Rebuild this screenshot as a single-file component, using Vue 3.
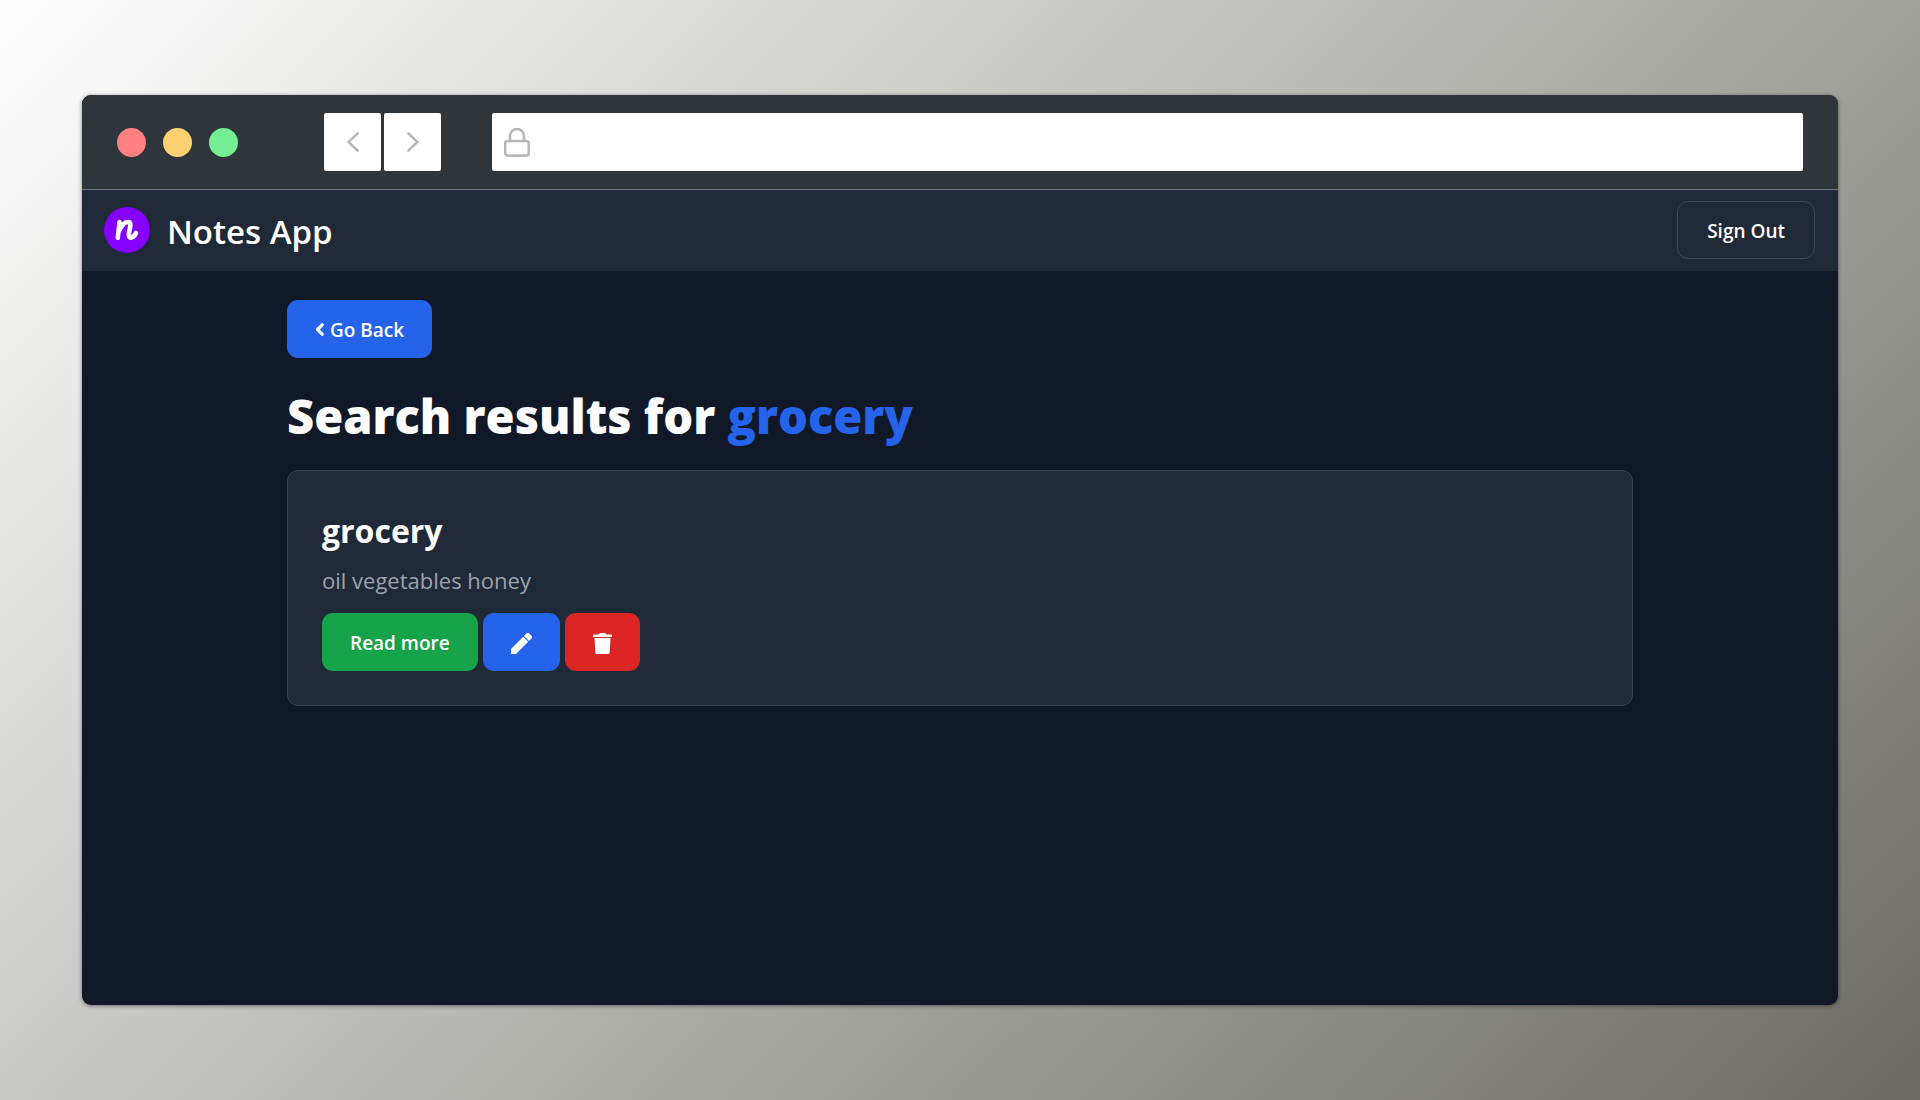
<script setup>
import { ref } from 'vue'

const query = ref('grocery')
const address = ref('')
const notes = ref([{ id: 1, title: 'grocery', body: 'oil vegetables honey' }])
</script>

<template>
  <div class="page">
    <div class="window">
      <div class="chrome">
        <div class="lights">
          <span class="light red"></span>
          <span class="light amber"></span>
          <span class="light green"></span>
        </div>
        <div class="history">
          <button type="button" class="step" aria-label="Back">
            <svg width="12" height="20" viewBox="0 0 12 20"><path d="M10.500 1.500 1.500 10l9 8.500" /></svg>
          </button>
          <button type="button" class="step" aria-label="Forward">
            <svg width="12" height="20" viewBox="0 0 12 20"><path d="M1.500 1.500 10.500 10l-9 8.500" /></svg>
          </button>
        </div>
        <div class="address">
          <svg width="26" height="29" viewBox="0 0 26 29">
            <path d="M6 13V8a7 7 0 0 1 14 0v5" />
            <rect x="1.200" y="13" width="23.600" height="14.600" rx="2.500" />
          </svg>
          <input v-model="address" type="text" aria-label="Address" />
        </div>
      </div>

      <header class="navbar">
        <a class="brand" href="#">
          <svg width="46" height="46" viewBox="0 0 46 46">
            <circle cx="23" cy="23" r="23" fill="#8500ff" />
            <path
              d="M15.500 15c.2 5-1.500 10.500-1.700 15.800M15.500 23c2.500-5 5-8 8.500-8 4.500 0 1.300 7 .8 12.500-.2 5 5 3.500 7.200-1.500"
              fill="none"
              stroke="#fff"
              stroke-width="4.600"
              stroke-linecap="round"
              stroke-linejoin="round"
            />
          </svg>
          <span>Notes App</span>
        </a>
        <button type="button" class="btn outline">Sign Out</button>
      </header>

      <main class="content">
        <button type="button" class="btn blue">
          <svg class="chevron" width="9" height="14" viewBox="0 0 9 14">
            <path d="M7.200 1.800 2.500 6.500l4.700 4.700" fill="none" stroke="#fff" stroke-width="3.200" stroke-linecap="round" stroke-linejoin="round" />
          </svg>
          Go Back
        </button>
        <h1>Search results for <span>{{ query }}</span></h1>
        <article v-for="note in notes" :key="note.id" class="card">
          <h2>{{ note.title }}</h2>
          <p>{{ note.body }}</p>
          <div class="actions">
            <button type="button" class="btn green">Read more</button>
            <button type="button" class="btn blue" aria-label="Edit note">
              <svg width="21" height="21" viewBox="0 0 21 21" fill="#fff">
                <path d="M0 21v-5L12.200 3.800l5 5L5 21z" />
                <path d="M13 3 15.400.6a2 2 0 0 1 2.800 0l2.200 2.200a2 2 0 0 1 0 2.800L18 8z" />
              </svg>
            </button>
            <button type="button" class="btn danger" aria-label="Delete note">
              <svg width="19" height="21" viewBox="0 0 19 21" fill="#fff">
                <path d="M.8 1.600h4.700L6.300.4Q6.600 0 7.100 0h4.800q.5 0 .8.400l.8 1.200h4.700q.8 0 .8.800v1.500H0V2.400q0-.8.8-.8z" />
                <path d="M1.500 4.900h16l-.8 14.500q-.1 1.600-1.700 1.600H4q-1.600 0-1.700-1.600z" />
              </svg>
            </button>
          </div>
        </article>
      </main>
    </div>
  </div>
</template>

<style>
body {
  margin: 0;
}
</style>

<style scoped>
* {
  box-sizing: border-box;
}

.page {
  display: flex;
  min-height: 100vh;
  padding: 95px 82px;
  background: linear-gradient(135deg, #ffffff 0%, #6b6b63 100%);
  color: #ffffff;
  font-family: "Open Sans", "Noto Sans", sans-serif;
}

svg {
  display: block;
  flex: none;
}

button,
input {
  font-family: inherit;
}

.window {
  flex: 1;
  min-width: 0;
  overflow: hidden;
  border-radius: 9px;
  background: #111827;
  box-shadow: 0 1px 4px rgba(0, 0, 0, 0.45);
}

.chrome {
  display: flex;
  align-items: center;
  padding: 18px 35px;
  border-bottom: 1px solid #70767a;
  background: #2e363c;
}

.lights {
  display: flex;
  gap: 17px;
  margin-right: 86px;
}

.light {
  width: 29px;
  height: 29px;
  border-radius: 50%;
}

.light.red {
  background: #ff8080;
}

.light.amber {
  background: #ffd071;
}

.light.green {
  background: #74ed94;
}

.history {
  display: flex;
  gap: 3px;
  margin-right: 51px;
}

.step {
  display: flex;
  align-items: center;
  justify-content: center;
  width: 57px;
  height: 58px;
  padding: 0;
  border: 0;
  border-radius: 2px;
  background: #ffffff;
}

.step path,
.address path,
.address rect {
  fill: none;
  stroke: #b8b8b8;
  stroke-width: 2.600;
  stroke-linecap: round;
}

.address {
  display: flex;
  flex: 1;
  align-items: center;
  gap: 12px;
  height: 58px;
  padding: 0 12px;
  border-radius: 2px;
  background: #ffffff;
}

.address input {
  flex: 1;
  min-width: 0;
  border: 0;
  outline: 0;
  background: transparent;
  font-size: 20px;
}

.navbar {
  display: flex;
  align-items: center;
  justify-content: space-between;
  padding: 11px 23px 12px 22px;
  background: #1f2937;
}

.brand {
  display: flex;
  align-items: center;
  gap: 17px;
  color: inherit;
  font-size: 33px;
  font-weight: 600;
  line-height: 46px;
  text-decoration: none;
}

.brand span {
  padding-top: 4px;
}

.btn {
  display: inline-flex;
  align-items: center;
  justify-content: center;
  height: 58px;
  padding: 2px 28px 0;
  border: 0;
  border-radius: 11px;
  color: #ffffff;
  font-size: 19px;
  font-weight: 600;
  line-height: 28px;
}

.outline {
  padding: 2px 29px 0;
  border: 1px solid #414b5a;
  background: transparent;
}

.blue {
  background: #2563eb;
}

.green {
  background: #16a34a;
}

.danger {
  background: #dc2626;
}

.chevron {
  margin-right: 6px;
}

.content {
  padding: 29px 205px;
}

h1 {
  margin: 26px 0 22px;
  font-size: 47px;
  font-weight: 800;
  line-height: 64px;
}

h1 span {
  color: #2563eb;
}

.card {
  padding: 34px;
  border: 1px solid #374151;
  border-radius: 11px;
  background: #1f2937;
}

h2 {
  margin: 6px 0 12px;
  font-size: 32px;
  font-weight: 700;
  line-height: 40px;
}

p {
  margin: 0 0 16px;
  color: #9ca3af;
  font-size: 22px;
  line-height: 34px;
}

.actions {
  display: flex;
  gap: 5px;
}
</style>
